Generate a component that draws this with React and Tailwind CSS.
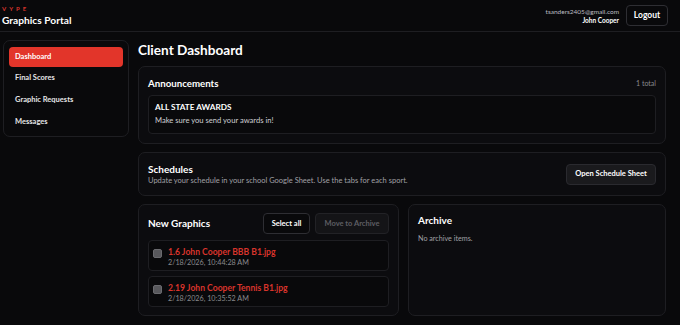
import React from "react";

const font = { fontFamily: "Lato, 'Noto Sans', sans-serif" };

function Card({ className = "", children }) {
  return (
    <div className={`rounded-[7px] border border-[#1e1e22] bg-[#0c0c0f] ${className}`}>{children}</div>
  );
}

function FileItem({ name, date }) {
  return (
    <div className="flex h-[31px] items-start gap-[6px] rounded-[4px] border border-[#1e1e22] bg-[#09090b] px-[4px] pt-[5px]">
      <div className="mt-[3px] h-[9px] w-[9px] rounded-[2px] border border-[#6a6a6e] bg-[#58585c]" />
      <div className="flex flex-col">
        <div className="text-[8.6px] font-bold leading-[12px] text-[#d9342b]">{name}</div>
        <div className="text-[7.2px] leading-[10px] text-[#8a8a8e]">{date}</div>
      </div>
    </div>
  );
}

export default function App() {
  return (
    <div className="h-[325px] w-[680px] overflow-hidden bg-[#09090b] text-white" style={font}>
      {/* Header */}
      <div className="flex h-[32px] items-center justify-between border-b border-[#1e1e22] pl-[2px] pr-[12px]">
        <div className="flex flex-col">
          <div className="text-[6px] font-bold leading-[8px] tracking-[3px] text-[#d9342b]">VYPE</div>
          <div className="text-[10.2px] font-bold leading-[14px]">Graphics Portal</div>
        </div>
        <div className="flex items-center gap-[7px]">
          <div className="flex flex-col items-end">
            <div className="text-[6.5px] leading-[9px] text-[#bdbdc2]">tsanders2405@gmail.com</div>
            <div className="text-[6.5px] font-bold leading-[9px]">John Cooper</div>
          </div>
          <div className="flex h-[21px] w-[42px] items-center justify-center rounded-[4px] border border-[#2e2e33] text-[8.5px] font-bold">
            Logout
          </div>
        </div>
      </div>

      <div className="flex gap-[9px] pl-[3px] pr-[14px] pt-[8px]">
        {/* Sidebar */}
        <div className="h-[97px] w-[126px] shrink-0 rounded-[7px] border border-[#1e1e22] bg-[#09090b] px-[5px] pt-[6px]">
          <div className="flex h-[20px] items-center rounded-[4px] bg-[#e2352a] pl-[6px] text-[7.5px] font-bold">Dashboard</div>
          <div className="flex h-[22px] items-center pl-[6px] text-[7.5px] font-bold text-[#e6e6e8]">Final Scores</div>
          <div className="flex h-[22px] items-center pl-[6px] text-[7.5px] font-bold text-[#e6e6e8]">Graphic Requests</div>
          <div className="flex h-[22px] items-center pl-[6px] text-[7.5px] font-bold text-[#e6e6e8]">Messages</div>
        </div>

        {/* Main */}
        <div className="flex min-w-0 flex-1 flex-col">
          <div className="mt-[1px] text-[13.6px] font-bold leading-[18px]">Client Dashboard</div>

          <Card className="mt-[7px] h-[78px] px-[9px] pt-[9px]">
            <div className="flex items-center justify-between">
              <div className="text-[9.7px] font-bold leading-[14px]">Announcements</div>
              <div className="text-[7px] text-[#8a8a8e]">1 total</div>
            </div>
            <div className="mt-[5px] h-[39px] rounded-[4px] border border-[#1e1e22] bg-[#09090b] px-[6px] pt-[6px]">
              <div className="text-[8.2px] font-bold leading-[11px]">ALL STATE AWARDS</div>
              <div className="mt-[2px] text-[7.6px] leading-[10px] text-[#cfcfd3]">Make sure you send your awards in!</div>
            </div>
          </Card>

          <Card className="mt-[8px] flex h-[44px] items-center justify-between px-[9px]">
            <div className="flex flex-col">
              <div className="text-[10px] font-bold leading-[13px]">Schedules</div>
              <div className="text-[7.5px] leading-[10px] text-[#a0a0a5]">
                Update your schedule in your school Google Sheet. Use the tabs for each sport.
              </div>
            </div>
            <div className="flex h-[21px] w-[90px] items-center justify-center rounded-[4px] border border-[#2a2a2f] bg-[#1a1a1d] text-[7.5px] font-bold">
              Open Schedule Sheet
            </div>
          </Card>

          <div className="mt-[8px] flex gap-[9px]">
            <Card className="h-[112px] w-[261px] shrink-0 px-[9px] pt-[8px]">
              <div className="flex items-center justify-between">
                <div className="text-[10px] font-bold">New Graphics</div>
                <div className="flex gap-[5px]">
                  <div className="flex h-[21px] w-[47px] items-center justify-center rounded-[4px] border border-[#2e2e33] bg-[#09090b] text-[7.5px] font-bold">
                    Select all
                  </div>
                  <div className="flex h-[21px] w-[74px] items-center justify-center rounded-[4px] border border-[#222226] bg-[#141417] text-[7.5px] font-bold text-[#5e5e63]">
                    Move to Archive
                  </div>
                </div>
              </div>
              <div className="mt-[6px] flex flex-col gap-[5px]">
                <FileItem name="1.6 John Cooper BBB B1.jpg" date="2/18/2026, 10:44:28 AM" />
                <FileItem name="2.19 John Cooper Tennis B1.jpg" date="2/18/2026, 10:35:52 AM" />
              </div>
            </Card>
            <Card className="h-[112px] flex-1 px-[9px] pt-[9px]">
              <div className="text-[10px] font-bold leading-[13px]">Archive</div>
              <div className="mt-[7px] text-[7.2px] text-[#a0a0a5]">No archive items.</div>
            </Card>
          </div>
        </div>
      </div>
    </div>
  );
}
